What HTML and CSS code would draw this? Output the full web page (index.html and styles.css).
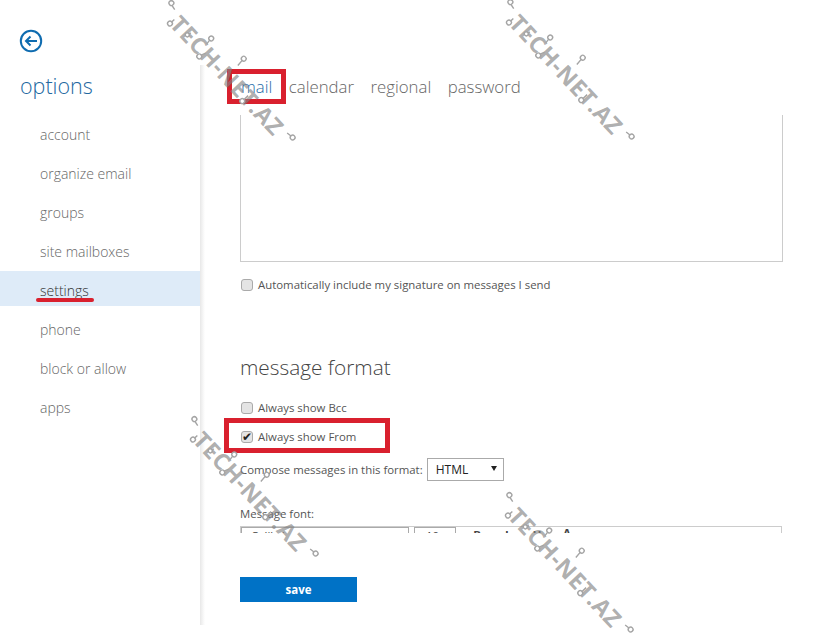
FILE: index.html
```html
<!DOCTYPE html>
<html lang="en">
<head>
    <meta charset="UTF-8">
    <title>options</title>
    <link rel="stylesheet" href="styles.css">
</head>
<body>
    <div class="page">
        <div class="sidebar">
            <svg class="back-icon" width="24" height="24" viewBox="0 0 24 24">
                <circle cx="12" cy="12" r="10.2" fill="none" stroke="#0f6cb0" stroke-width="2"/>
                <path d="M18 12H7M11.5 7.5L7 12l4.5 4.5" fill="none" stroke="#0f6cb0" stroke-width="2"/>
            </svg>
            <h1 class="side-title">options</h1>
            <ul class="side-nav">
                <li>account</li>
                <li>organize email</li>
                <li>groups</li>
                <li>site mailboxes</li>
                <li class="active">settings</li>
                <li>phone</li>
                <li>block or allow</li>
                <li>apps</li>
            </ul>
        </div>

        <div class="panel">
            <div class="tabs">
                <span class="tab selected">mail</span>
                <span class="tab">calendar</span>
                <span class="tab">regional</span>
                <span class="tab">password</span>
            </div>

            <div class="scroll-pane">
                <div class="sig-box"></div>
                <label class="check-row sig-check"><input type="checkbox">Automatically include my signature on messages I send</label>

                <h2 class="section-title">message format</h2>
                <label class="check-row"><input type="checkbox">Always show Bcc</label>
                <label class="check-row"><input type="checkbox" checked>Always show From</label>
                <div class="format-row">
                    <span>Compose messages in this format:</span>
                    <span class="fake-select">HTML<i class="caret"></i></span>
                </div>
                <div class="font-label">Message font:</div>
                <div class="editor">
                    <span class="font-name">Calibri</span>
                    <span class="font-size">10</span>
                    <span class="tool">B</span>
                    <span class="tool">I</span>
                    <span class="tool">U</span>
                    <span class="tool tool-color">A</span>
                </div>
            </div>

            <button class="save-btn" type="button">save</button>
        </div>
    </div>

    <!-- annotations -->
    <div class="mark mark-mail"></div>
    <div class="mark mark-from"></div>
    <div class="mark-line"></div>

    <!-- watermark -->
    <svg class="wm-defs" width="0" height="0">
        <symbol id="wm-nodes" viewBox="-95 -20 190 40">
            <path d="M-90 -1l6 1M-77 12l0 -5M-57 8l1 -4M-33 13l2 -6M-38 -6l1 6M-1 -16l1 8M29 11l0 -6M89 1l-6 1"/>
            <circle cx="-91" cy="-2" r="2.4"/>
            <circle cx="-77" cy="13" r="2.4"/>
            <circle cx="-57" cy="8" r="2"/>
            <circle cx="-33" cy="14" r="2.4"/>
            <circle cx="-38" cy="-7" r="2.4"/>
            <circle cx="-1" cy="-17" r="2.4"/>
            <circle cx="29" cy="13" r="2.4"/>
            <circle cx="90" cy="1" r="2.4"/>
        </symbol>
    </svg>
    <div class="wm wm-a">Tech-Net.az<svg class="wm-rings"><use href="#wm-nodes"/></svg></div>
    <div class="wm wm-b">Tech-Net.az<svg class="wm-rings"><use href="#wm-nodes"/></svg></div>
    <div class="wm wm-c">Tech-Net.az<svg class="wm-rings"><use href="#wm-nodes"/></svg></div>
    <div class="wm wm-d">Tech-Net.az<svg class="wm-rings"><use href="#wm-nodes"/></svg></div>
</body>
</html>
```

FILE: styles.css
```css
html, body {
    margin: 0;
    height: 100%;
    overflow: hidden;
}

body {
    font-family: "Open Sans", "Liberation Sans", sans-serif;
    background-color: #fff;
    color: #666;
}

.page {
    display: flex;
    height: 637px;
}

.sidebar {
    width: 200px;
    flex-shrink: 0;
    padding-top: 29px;
}

.back-icon {
    display: block;
    margin-left: 19px;
}

.side-title {
    margin: 18px 0 0 20px;
    font-size: 21.5px;
    font-weight: 300;
    line-height: 30px;
    color: #22689f;
}

.side-nav {
    list-style: none;
    margin: 14px 0 0;
    padding: 0;
}

.side-nav li {
    height: 35px;
    margin-bottom: 4px;
    padding-left: 40px;
    font-size: 14px;
    font-weight: 300;
    line-height: 39px;
    color: #666;
}

.side-nav li.active {
    background-color: #deebf8;
    color: #333;
}

.panel {
    width: 615px;
    height: 560px;
    margin-top: 65px;
    background: linear-gradient(to right, #e8e8e8, #f6f6f6 3px, #fff 5px);
}

.tabs {
    display: flex;
    gap: 16.5px;
    height: 50px;
    padding-left: 41px;
    font-size: 16.8px;
    font-weight: 300;
    line-height: 44px;
    color: #666;
}

.tab.selected {
    color: #1f6ca8;
}

.scroll-pane {
    height: 418px;
    padding-left: 40px;
    overflow: hidden;
    font-size: 11.4px;
    color: #555;
}

.sig-box {
    width: 541px;
    height: 146px;
    border: 1px solid #ccc;
    border-top: none;
}

.check-row {
    display: flex;
    align-items: center;
    height: 29px;
}

.check-row input {
    position: relative;
    width: 12px;
    height: 12px;
    margin: 0 5px 0 1px;
    border: 1px solid #aaa;
    border-radius: 3px;
    background-color: #e4e4e4;
    appearance: none;
}

.check-row input:checked::after {
    content: "✔";
    position: absolute;
    top: -2px;
    left: 0;
    font-family: "DejaVu Sans", sans-serif;
    font-size: 12px;
    line-height: 14px;
    color: #222;
}

.sig-check {
    margin-top: 8px;
}

.section-title {
    margin: 53px 0 0;
    font-size: 20.8px;
    font-weight: 300;
    line-height: 30px;
    color: #444;
}

.section-title + .check-row {
    margin-top: 11px;
}

.format-row {
    display: flex;
    align-items: center;
    gap: 4px;
    margin-top: 3px;
    height: 30px;
}

.fake-select {
    position: relative;
    width: 67px;
    height: 21px;
    padding-left: 8px;
    border: 1px solid #aaa;
    font-size: 12px;
    line-height: 21px;
    color: #222;
}

.caret {
    position: absolute;
    top: 7px;
    right: 6px;
    border-top: 5px solid #222;
    border-left: 3px solid transparent;
    border-right: 3px solid transparent;
}

.font-label {
    margin-top: 21px;
    line-height: 17px;
}

.editor {
    display: flex;
    width: 542px;
    height: 30px;
    margin-top: 4px;
    border: 1px solid #ccc;
    box-sizing: border-box;
    color: #444;
}

.font-name {
    box-sizing: border-box;
    width: 168px;
    height: 30px;
    padding-left: 9px;
    border: 1px solid #aaa;
    line-height: 16px;
}

.font-size {
    box-sizing: border-box;
    width: 42px;
    height: 30px;
    margin-left: 5px;
    padding-left: 11px;
    border: 1px solid #aaa;
    line-height: 16px;
}

.tool {
    width: 30px;
    font-weight: 700;
    text-align: center;
    line-height: 16px;
}

.tool:nth-child(3) {
    margin-left: 6px;
}

.tool-color {
    line-height: 12px;
}

.save-btn {
    display: block;
    width: 117px;
    height: 25px;
    margin: 44px 0 0 40px;
    border: none;
    background-color: #0072c6;
    color: #fff;
    font-family: inherit;
    font-size: 11.5px;
    font-weight: 700;
}

.mark {
    position: absolute;
    box-sizing: border-box;
    border: 5px solid #d9202e;
}

.mark-mail {
    left: 227px;
    top: 69px;
    width: 59px;
    height: 35px;
}

.mark-from {
    left: 224px;
    top: 418px;
    width: 166px;
    height: 35px;
}

.mark-line {
    position: absolute;
    left: 36px;
    top: 298px;
    width: 58px;
    height: 4px;
    border-radius: 2px;
    background-color: #d9202e;
}

/* watermark: 190x40 box turned around its centre */
.wm {
    position: absolute;
    width: 190px;
    height: 40px;
    text-align: center;
    text-transform: uppercase;
    white-space: nowrap;
    font-size: 23px;
    font-weight: 700;
    line-height: 52px;
    letter-spacing: 0.6px;
    color: rgba(130, 130, 130, 0.65);
    transform: rotate(47deg);
}

.wm-defs {
    position: absolute;
}

.wm-rings {
    position: absolute;
    left: 0;
    top: 0;
    width: 190px;
    height: 40px;
    overflow: visible;
    fill: #fff;
    stroke: #a5a5a5;
    stroke-width: 1.4;
}

.wm-a { left: 137px; top: 51px; }
.wm-b { left: 476px; top: 50px; }
.wm-c { left: 160px; top: 467px; }
.wm-d { left: 475px; top: 543px; }
```
